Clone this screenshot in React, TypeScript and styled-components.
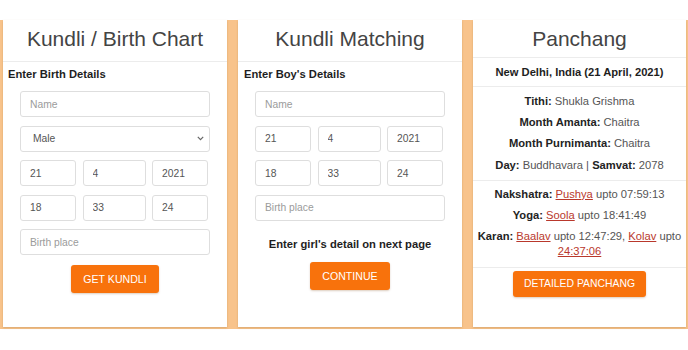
import React from "react";
import styled, { createGlobalStyle } from "styled-components";

const GlobalStyle = createGlobalStyle`
  html, body { margin: 0; padding: 0; background: #ffffff; }
  body {
    font-family: "Liberation Sans", Arial, Helvetica, sans-serif;
    -webkit-font-smoothing: antialiased;
  }
  * { box-sizing: border-box; }
`;

const Page = styled.div`
  width: 688px;
  height: 350px;
  padding-top: 20px;
  background: #ffffff;
`;

const Band = styled.div`
  display: flex;
  gap: 11px;
  height: 309px;
  padding: 0 2px 2px 3px;
  background: #f8c38b;
`;

const Card = styled.section<{ $w: number }>`
  width: ${(p) => p.$w}px;
  flex: none;
  display: flex;
  flex-direction: column;
  background: #ffffff;
  box-shadow: 0 1px 2px rgba(150, 105, 50, 0.3);
`;

const CardTitle = styled.h2<{ $pb: number }>`
  margin: 0;
  padding: 7px 0 ${(p) => p.$pb}px;
  font-size: 21px;
  line-height: 24px;
  font-weight: 400;
  color: #444444;
  text-align: center;
  border-bottom: 1px solid #ececec;
`;

const SectionLabel = styled.div<{ $pl: number }>`
  margin: 5px 0 0;
  padding-left: ${(p) => p.$pl}px;
  font-size: 11.2px;
  line-height: 14px;
  font-weight: 700;
  color: #1e1e1e;
`;

const Form = styled.div`
  width: 190px;
  margin: 10px auto 0;
  display: flex;
  flex-direction: column;
  gap: 8.5px;
`;

const fieldBase = `
  height: 26px;
  width: 100%;
  border: 1px solid #dedede;
  border-radius: 3px;
  background: #ffffff;
  font-family: "Liberation Sans", Arial, sans-serif;
  font-size: 10.3px;
  color: #555555;
  outline: none;
`;

const Field = styled.input`
  ${fieldBase}
  padding: 0 9px;
  &::placeholder { color: #9b9b9b; }
`;

const SelectWrap = styled.div`
  position: relative;
  height: 26px;
`;

const Select = styled.select`
  ${fieldBase}
  appearance: none;
  -webkit-appearance: none;
  padding: 0 12px;
`;

const Chevron = styled.svg`
  position: absolute;
  right: 6px;
  top: 10px;
  pointer-events: none;
`;

const Triple = styled.div`
  display: grid;
  grid-template-columns: 56px 63px 56px;
  gap: 6.5px;
`;

const ActionButton = styled.button<{ $h: number; $fs: number; $px: number; $mt: number }>`
  align-self: center;
  height: ${(p) => p.$h}px;
  margin-top: ${(p) => p.$mt}px;
  padding: 0 ${(p) => p.$px}px;
  border: none;
  border-radius: 3px;
  background: #f8720c;
  color: #ffffff;
  font-family: "Liberation Sans", Arial, sans-serif;
  font-size: ${(p) => p.$fs}px;
  letter-spacing: 0;
  text-transform: uppercase;
  box-shadow: 0 1px 2px rgba(120, 60, 0, 0.25);
  cursor: pointer;
`;

const Note = styled.div`
  margin-top: 16px;
  font-size: 11.2px;
  line-height: 14px;
  font-weight: 700;
  color: #1e1e1e;
  text-align: center;
`;

const Location = styled.div`
  padding: 7px 0;
  font-size: 11.2px;
  line-height: 14px;
  font-weight: 700;
  color: #1e1e1e;
  text-align: center;
  border-bottom: 1px solid #ececec;
`;

const InfoBlock = styled.div<{ $pt: number; $pb: number; $gap: number }>`
  display: flex;
  flex-direction: column;
  gap: ${(p) => p.$gap}px;
  padding: ${(p) => p.$pt}px 0 ${(p) => p.$pb}px;
  border-bottom: 1px solid #ececec;
`;

const InfoLine = styled.p`
  margin: 0;
  font-size: 11.2px;
  line-height: 15px;
  color: #555555;
  text-align: center;
`;

const Label = styled.b`
  color: #232323;
  font-weight: 700;
`;

const Link = styled.a`
  color: #b9382c;
  text-decoration: underline;
`;

const BirthForm: React.FC<{ withGender: boolean }> = ({ withGender }) => (
  <Form>
    <Field placeholder="Name" />
    {withGender && (
      <SelectWrap>
        <Select defaultValue="Male">
          <option>Male</option>
          <option>Female</option>
        </Select>
        <Chevron width="7" height="5" viewBox="0 0 7 5">
          <path d="M0.8 0.8 L3.5 3.6 L6.2 0.8" fill="none" stroke="#666" strokeWidth="1.2" />
        </Chevron>
      </SelectWrap>
    )}
    <Triple>
      <Field defaultValue="21" />
      <Field defaultValue="4" />
      <Field defaultValue="2021" />
    </Triple>
    <Triple>
      <Field defaultValue="18" />
      <Field defaultValue="33" />
      <Field defaultValue="24" />
    </Triple>
    <Field placeholder="Birth place" />
  </Form>
);

export default function App() {
  return (
    <Page>
      <GlobalStyle />
      <Band>
        <Card $w={224}>
          <CardTitle $pb={10}>Kundli / Birth Chart</CardTitle>
          <SectionLabel $pl={5}>Enter Birth Details</SectionLabel>
          <BirthForm withGender />
          <ActionButton $h={28} $fs={10.6} $px={12} $mt={9.5}>
            Get Kundli
          </ActionButton>
        </Card>

        <Card $w={224}>
          <CardTitle $pb={10}>Kundli Matching</CardTitle>
          <SectionLabel $pl={6}>Enter Boy's Details</SectionLabel>
          <BirthForm withGender={false} />
          <Note>Enter girl's detail on next page</Note>
          <ActionButton $h={28} $fs={10.6} $px={12} $mt={11.5}>
            Continue
          </ActionButton>
        </Card>

        <Card $w={213}>
          <CardTitle $pb={6}>Panchang</CardTitle>
          <Location>New Delhi, India (21 April, 2021)</Location>
          <InfoBlock $pt={6.6} $pb={7} $gap={6.4}>
            <InfoLine>
              <Label>Tithi:</Label> Shukla Grishma
            </InfoLine>
            <InfoLine>
              <Label>Month Amanta:</Label> Chaitra
            </InfoLine>
            <InfoLine>
              <Label>Month Purnimanta:</Label> Chaitra
            </InfoLine>
            <InfoLine>
              <Label>Day:</Label> Buddhavara | <Label>Samvat:</Label> 2078
            </InfoLine>
          </InfoBlock>
          <InfoBlock $pt={6} $pb={8} $gap={6}>
            <InfoLine>
              <Label>Nakshatra:</Label> <Link href="#">Pushya</Link> upto 07:59:13
            </InfoLine>
            <InfoLine>
              <Label>Yoga:</Label> <Link href="#">Soola</Link> upto 18:41:49
            </InfoLine>
            <InfoLine>
              <Label>Karan:</Label> <Link href="#">Baalav</Link> upto 12:47:29,{" "}
              <Link href="#">Kolav</Link> upto <Link href="#">24:37:06</Link>
            </InfoLine>
          </InfoBlock>
          <ActionButton $h={26} $fs={10.4} $px={10.5} $mt={3}>
            Detailed Panchang
          </ActionButton>
        </Card>
      </Band>
    </Page>
  );
}
